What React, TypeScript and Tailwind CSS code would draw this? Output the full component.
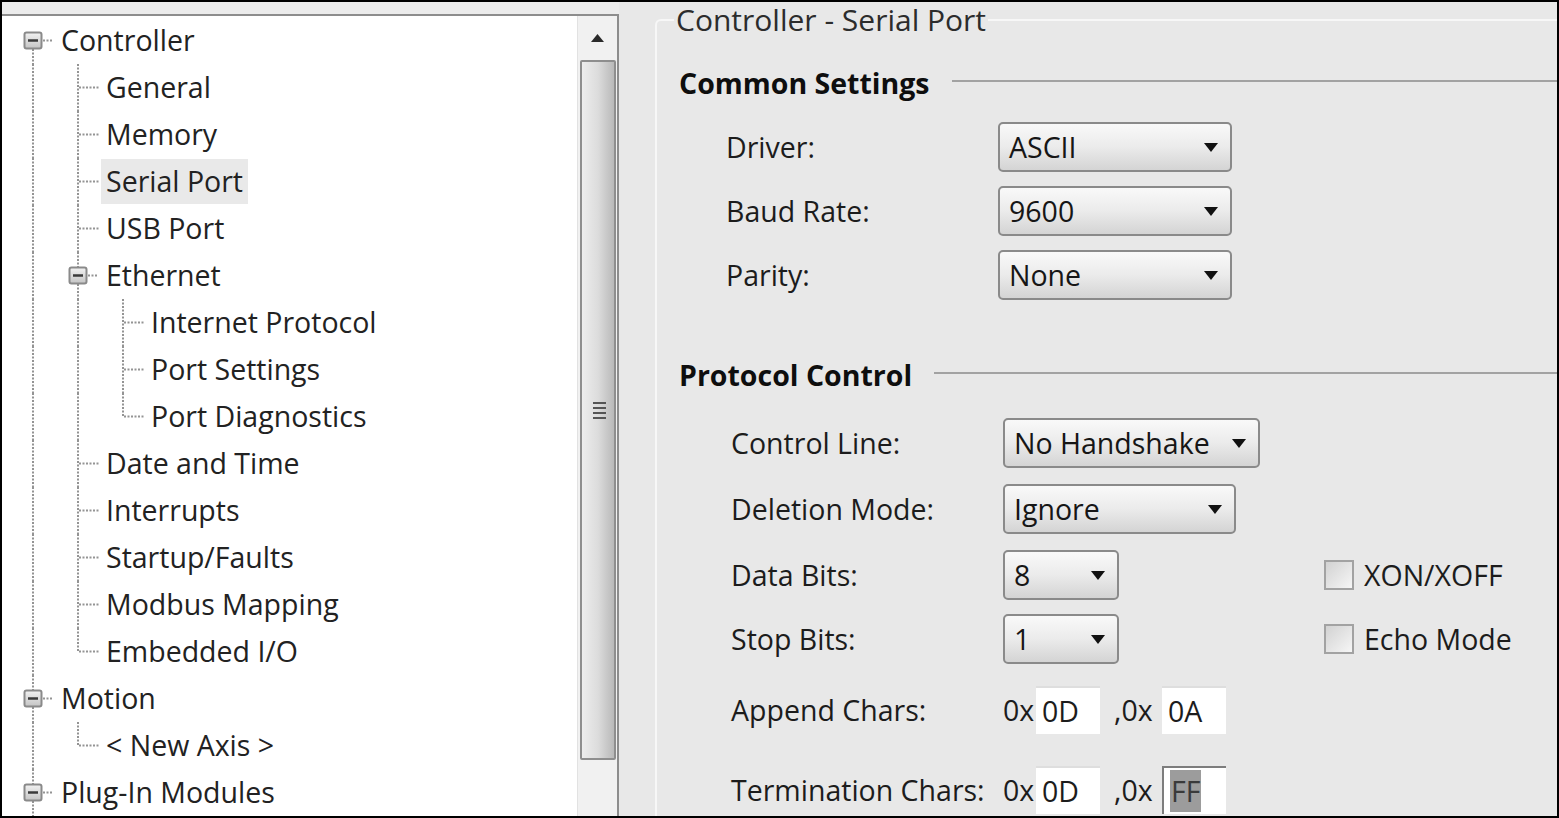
import React from 'react';

type TreeRow = {
    label: string;
    level: number;
    kind: 'tee' | 'ell' | 'box';
    up?: boolean;
    down?: boolean;
    guides: boolean[];
    selected?: boolean;
};

const TREE: TreeRow[] = [
    { label: 'Controller', level: 0, kind: 'box', up: false, down: true, guides: [] },
    { label: 'General', level: 1, kind: 'tee', guides: [true] },
    { label: 'Memory', level: 1, kind: 'tee', guides: [true] },
    { label: 'Serial Port', level: 1, kind: 'tee', guides: [true], selected: true },
    { label: 'USB Port', level: 1, kind: 'tee', guides: [true] },
    { label: 'Ethernet', level: 1, kind: 'box', up: true, down: true, guides: [true] },
    { label: 'Internet Protocol', level: 2, kind: 'tee', guides: [true, true] },
    { label: 'Port Settings', level: 2, kind: 'tee', guides: [true, true] },
    { label: 'Port Diagnostics', level: 2, kind: 'ell', guides: [true, true] },
    { label: 'Date and Time', level: 1, kind: 'tee', guides: [true] },
    { label: 'Interrupts', level: 1, kind: 'tee', guides: [true] },
    { label: 'Startup/Faults', level: 1, kind: 'tee', guides: [true] },
    { label: 'Modbus Mapping', level: 1, kind: 'tee', guides: [true] },
    { label: 'Embedded I/O', level: 1, kind: 'ell', guides: [true] },
    { label: 'Motion', level: 0, kind: 'box', up: true, down: true, guides: [] },
    { label: '< New Axis >', level: 1, kind: 'ell', guides: [true] },
    { label: 'Plug-In Modules', level: 0, kind: 'box', up: true, down: true, guides: [] },
];

const DOT = { stroke: '#949494', strokeWidth: 2, strokeDasharray: '2 1.5' };

// one 45x47 cell of the tree's connector lines
const GuideCell = ({ line }: { line: boolean }) => (
    <svg width="45" height="47" className="shrink-0">
        {line && <line x1="22" y1="0" x2="22" y2="47" {...DOT} />}
    </svg>
);

const NodeCell = ({ row }: { row: TreeRow }) => (
    <svg width="45" height="47" className="shrink-0">
        <defs>
            <linearGradient id="boxfill" x1="0" y1="0" x2="0" y2="1">
                <stop offset="0" stopColor="#f2f2f2" />
                <stop offset="1" stopColor="#c4c4c4" />
            </linearGradient>
        </defs>
        {row.kind === 'tee' && (
            <>
                <line x1="22" y1="0" x2="22" y2="47" {...DOT} />
                <line x1="23" y1="23.5" x2="43" y2="23.5" {...DOT} />
            </>
        )}
        {row.kind === 'ell' && (
            <>
                <line x1="22" y1="0" x2="22" y2="24" {...DOT} />
                <line x1="23" y1="23.5" x2="43" y2="23.5" {...DOT} />
            </>
        )}
        {row.kind === 'box' && (
            <>
                {row.up && <line x1="22" y1="0" x2="22" y2="15" {...DOT} />}
                {row.down && <line x1="22" y1="32" x2="22" y2="47" {...DOT} />}
                <rect x="13.5" y="15.5" width="17" height="16" rx="2" fill="url(#boxfill)" stroke="#8a8a8a" strokeWidth="2" />
                <line x1="17" y1="23.5" x2="27" y2="23.5" stroke="#3a3a3a" strokeWidth="2.5" />
                <line x1="32" y1="23.5" x2="42" y2="23.5" {...DOT} />
            </>
        )}
    </svg>
);

const Arrow = () => (
    <svg width="14" height="9" viewBox="0 0 14 9" className="shrink-0">
        <polygon points="0,0 14,0 7,9" fill="#111" />
    </svg>
);

const Dropdown = ({ value, w }: { value: string; w: string }) => (
    <div className={`${w} h-[50px] shrink-0 flex items-center justify-between pl-[9px] pr-[12px] border-2 border-[#8a8a8a] rounded-[5px] bg-linear-to-b from-[#f9f9f9] via-[#ebebeb] to-[#d4d4d4] text-[#161616]`}>
        <span>{value}</span>
        <Arrow />
    </div>
);

const CheckBox = ({ label }: { label: string }) => (
    <div className="flex items-center gap-[10px]">
        <div className="w-[30px] h-[30px] border-2 border-[#a2a2a2] bg-linear-to-br from-[#d2d2d2] to-[#f6f6f6]" />
        <span>{label}</span>
    </div>
);

const HexBox = ({ value, focused }: { value: string; focused?: boolean }) => (
    <div className={`w-[64px] h-[48px] flex items-center pl-[6px] bg-white border-t-2 ${focused ? 'border-l-2 border-[#7d7d7d]' : 'border-[#dedede]'}`}>
        {focused ? <span className="bg-[#9c9c9c] text-[#3a3a3a] px-[1px]">{value}</span> : <span>{value}</span>}
    </div>
);

const Section = ({ title }: { title: string }) => (
    <div className="flex items-center h-[40px] pl-[22px]">
        <span className="font-bold text-[#0e0e0e]">{title}</span>
        <div className="flex-1 h-[2px] bg-[#a2a2a2] ml-[22px] -mt-[5px]" />
    </div>
);

export default function App() {
    return (
        <div className="w-[1559px] h-[818px] border-2 border-black bg-[#e8e8e8] flex overflow-hidden font-['Open_Sans','Noto_Sans',sans-serif] text-[28.5px] font-medium text-[#1c1c1c]">
            {/* left: navigation tree */}
            <div className="w-[617px] shrink-0 flex flex-col">
                <div className="h-[12px] bg-[#ececec]" />
                <div className="flex-1 flex border-t-2 border-r-2 border-[#8d8d8d] bg-white">
                    <div className="w-[575px] pt-[1px] pl-[9px]">
                        {TREE.map((row) => (
                            <div key={row.label} className="flex items-center h-[47px]">
                                {row.guides.map((g, i) => (
                                    <GuideCell key={i} line={g} />
                                ))}
                                <NodeCell row={row} />
                                <span className={`px-[5px] leading-[45px] text-[#222] ${row.selected ? 'bg-[#e9e9e9]' : ''}`}>{row.label}</span>
                            </div>
                        ))}
                    </div>
                    {/* scrollbar */}
                    <div className="w-[40px] flex flex-col items-center bg-[#f1f1f1] border-l border-[#e2e2e2]">
                        <div className="h-[44px] flex items-center justify-center">
                            <svg width="13" height="8" viewBox="0 0 13 8">
                                <polygon points="0,8 13,8 6.5,0" fill="#2a2a2a" />
                            </svg>
                        </div>
                        <div className="w-[36px] h-[700px] border-2 border-[#8e8e8e] rounded-[2px] bg-linear-to-r from-[#ededed] via-[#dcdcdc] to-[#b9b9b9] flex items-center justify-center">
                            <div className="flex flex-col gap-[3px] -mr-[4px]">
                                <div className="w-[13px] h-[2px] bg-[#555]" />
                                <div className="w-[13px] h-[2px] bg-[#555]" />
                                <div className="w-[13px] h-[2px] bg-[#555]" />
                                <div className="w-[13px] h-[2px] bg-[#555]" />
                            </div>
                        </div>
                    </div>
                </div>
            </div>

            {/* right: settings */}
            <div className="flex-1 pl-[36px]">
                <fieldset className="h-full border-2 border-r-0 border-b-0 border-[#f7f7f7] rounded-tl-[6px] p-0 m-0 min-w-0">
                    <legend className="ml-[17px] px-[2px] leading-[36px] text-[30px] text-[#2c2c2c]">Controller - Serial Port</legend>

                    <div className="mt-[25px]">
                        <Section title="Common Settings" />
                    </div>
                    <div className="mt-[12px]">
                        {[
                            ['Driver:', 'ASCII'],
                            ['Baud Rate:', '9600'],
                            ['Parity:', 'None'],
                        ].map(([label, value]) => (
                            <div key={label} className="flex items-center h-[64px]">
                                <div className="w-[341px] shrink-0 pl-[69px]">{label}</div>
                                <Dropdown value={value} w="w-[234px]" />
                            </div>
                        ))}
                    </div>

                    <div className="mt-[48px]">
                        <Section title="Protocol Control" />
                    </div>
                    <div className="mt-[15px]">
                        <div className="flex items-center h-[66px]">
                            <div className="w-[346px] shrink-0 pl-[74px]">Control Line:</div>
                            <Dropdown value="No Handshake" w="w-[257px]" />
                        </div>
                        <div className="flex items-center h-[66px]">
                            <div className="w-[346px] shrink-0 pl-[74px]">Deletion Mode:</div>
                            <Dropdown value="Ignore" w="w-[233px]" />
                        </div>
                        <div className="flex items-center h-[66px]">
                            <div className="w-[346px] shrink-0 pl-[74px]">Data Bits:</div>
                            <Dropdown value="8" w="w-[116px]" />
                            <div className="ml-[205px]">
                                <CheckBox label="XON/XOFF" />
                            </div>
                        </div>
                        <div className="flex items-center h-[62px]">
                            <div className="w-[346px] shrink-0 pl-[74px]">Stop Bits:</div>
                            <Dropdown value="1" w="w-[116px]" />
                            <div className="ml-[205px]">
                                <CheckBox label="Echo Mode" />
                            </div>
                        </div>
                        <div className="flex items-center h-[60px] mt-[10px]">
                            <div className="w-[346px] shrink-0 pl-[74px]">Append Chars:</div>
                            <span className="w-[33px]">0x</span>
                            <HexBox value="0D" />
                            <span className="ml-[14px] w-[48px]">,0x</span>
                            <HexBox value="0A" />
                        </div>
                        <div className="flex items-center h-[80px] mt-[10px]">
                            <div className="w-[346px] shrink-0 pl-[74px]">Termination Chars:</div>
                            <span className="w-[33px]">0x</span>
                            <HexBox value="0D" />
                            <span className="ml-[14px] w-[48px]">,0x</span>
                            <HexBox value="FF" focused />
                        </div>
                    </div>
                </fieldset>
            </div>
        </div>
    );
}
